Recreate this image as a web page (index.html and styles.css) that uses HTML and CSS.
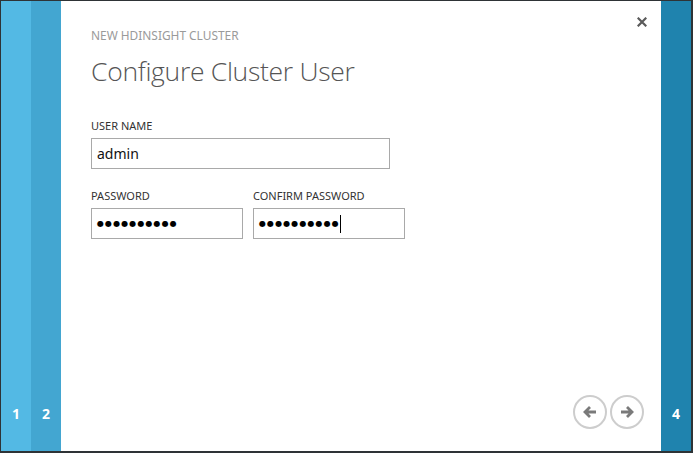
FILE: index.html
```html
<!DOCTYPE html>
<html>
<head>
<meta charset="utf-8">
<link rel="stylesheet" href="styles.css">
</head>
<body>
<div class="frame">
  <div class="step step-1"><span>1</span></div>
  <div class="step step-2"><span>2</span></div>
  <div class="panel">
    <button class="close" aria-label="Close">
      <svg width="10" height="10" viewBox="0 0 10 10"><path d="M1.5 1.5 L8.5 8.5 M8.5 1.5 L1.5 8.5" stroke="#5a5a5a" stroke-width="2.2" stroke-linecap="square"/></svg>
    </button>
    <div class="kicker">NEW HDINSIGHT CLUSTER</div>
    <h1 class="title">Configure Cluster User</h1>
    <div class="field">
      <label class="label">USER NAME</label>
      <div class="input wide">admin</div>
    </div>
    <div class="row">
      <div class="field">
        <label class="label">PASSWORD</label>
        <div class="input half dots">●●●●●●●●●●</div>
      </div>
      <div class="field">
        <label class="label">CONFIRM PASSWORD</label>
        <div class="input half dots">●●●●●●●●●●<span class="caret"></span></div>
      </div>
    </div>
    <div class="footer">
      <button class="nav" aria-label="Back">
        <svg width="16" height="14" viewBox="0 0 16 14"><path d="M14 7 H3 M8 2 L3 7 L8 12" fill="none" stroke="#7a7a7a" stroke-width="2.8"/></svg>
      </button>
      <button class="nav" aria-label="Next">
        <svg width="16" height="14" viewBox="0 0 16 14"><path d="M2 7 H13 M8 2 L13 7 L8 12" fill="none" stroke="#7a7a7a" stroke-width="2.8"/></svg>
      </button>
    </div>
  </div>
  <div class="step step-4"><span>4</span></div>
</div>
</body>
</html>
```
FILE: styles.css
```css
html, body {
  margin: 0;
  padding: 0;
  background: #2e3336;
}
body {
  width: 693px;
  height: 453px;
  overflow: hidden;
  font-family: "Noto Sans", "Open Sans", sans-serif;
}
.frame {
  display: flex;
  height: 450px;
  margin: 1px 2px 2px 1px;
}
.step {
  width: 30px;
  display: flex;
  flex-direction: column;
  justify-content: flex-end;
  align-items: center;
  color: #fff;
  font-weight: bold;
  font-size: 14px;
  line-height: 20px;
  padding-bottom: 27px;
  box-sizing: border-box;
}
.step-1 { background: #53b9e4; }
.step-2 { background: #43a6d1; }
.step-4 { background: #1f83ae; }
.panel {
  position: relative;
  width: 600px;
  background: #fff;
  padding: 26px 0 0 30px;
  box-sizing: border-box;
  display: flex;
  flex-direction: column;
}
.close {
  position: absolute;
  top: 15px;
  right: 13px;
  width: 12px;
  height: 12px;
  padding: 0;
  border: 0;
  background: none;
  display: flex;
  align-items: center;
  justify-content: center;
}
.kicker {
  font-size: 11.9px;
  line-height: 16px;
  color: #9a9a9a;
}
.title {
  margin: 12px 0 0 0;
  font-family: "Open Sans", sans-serif;
  font-weight: 300;
  font-size: 26.5px;
  line-height: 32px;
  color: #555;
  letter-spacing: -0.3px;
}
.field {
  display: flex;
  flex-direction: column;
}
.label {
  margin-top: 31px;
  font-size: 11px;
  line-height: 16px;
  color: #333;
  margin-bottom: 4px;
}
.row {
  display: flex;
  gap: 10px;
}
.row .label {
  margin-top: 19px;
}
.input {
  height: 31px;
  box-sizing: border-box;
  border: 1px solid #a9a9a9;
  padding: 0 5px;
  font-size: 14px;
  line-height: 29px;
  color: #111;
  display: flex;
  align-items: center;
}
.wide { width: 299px; }
.half { width: 152px; }
.dots {
  font-family: "DejaVu Sans", sans-serif;
  font-size: 8px;
  letter-spacing: 1.1px;
  color: #000;
  padding-left: 5px;
}
.caret {
  display: inline-block;
  width: 1px;
  height: 18px;
  background: #000;
  margin-left: 0;
}
.footer {
  margin-top: auto;
  display: flex;
  justify-content: flex-end;
  gap: 3px;
  padding: 0 17px 22px 0;
}
.nav {
  width: 34px;
  height: 34px;
  padding: 0;
  border: 2px solid #cdcdcd;
  border-radius: 50%;
  background: #fff;
  display: flex;
  align-items: center;
  justify-content: center;
}
```
